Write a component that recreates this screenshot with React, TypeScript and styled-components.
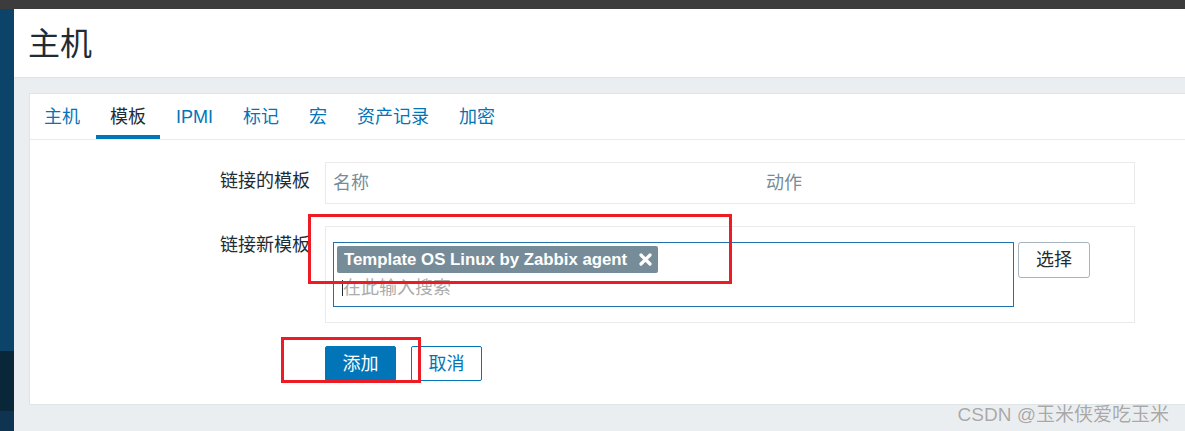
import React from "react";
import styled, { createGlobalStyle } from "styled-components";

const GlobalStyle = createGlobalStyle`
  html, body {
    margin: 0;
    padding: 0;
  }
  body {
    width: 1185px;
    height: 431px;
    overflow: hidden;
    background: #ebeef0;
    font-family: "Liberation Sans", "Noto Sans CJK SC", sans-serif;
    color: #1f2c33;
  }
`;

const Page = styled.div`
  position: relative;
  width: 1185px;
  height: 431px;
  display: flex;
  flex-direction: column;
  overflow: hidden;
`;

const TopBar = styled.div`
  height: 9px;
  flex-shrink: 0;
  background: #3c3c3c;
`;

const Body = styled.div`
  flex: 1;
  display: flex;
  min-height: 0;
`;

const Sidebar = styled.nav`
  width: 14px;
  flex-shrink: 0;
  display: flex;
  flex-direction: column;
`;

const SidebarBand = styled.div<{ $color: string; $height?: number }>`
  background: ${(p) => p.$color};
  ${(p) => (p.$height ? `height: ${p.$height}px;` : "flex: 1;")}
`;

const Main = styled.main`
  flex: 1;
  display: flex;
  flex-direction: column;
  background: #ebeef0;
`;

const Header = styled.header`
  height: 69px;
  flex-shrink: 0;
  display: flex;
  align-items: center;
  padding: 2px 0 0 14px;
  box-sizing: border-box;
  background: #fff;
  border-bottom: 1px solid #dfe4e7;
`;

const Title = styled.h1`
  margin: 0;
  font-size: 32px;
  font-weight: normal;
  color: #1f2c33;
  line-height: 1;
`;

const Content = styled.div`
  padding: 15px 0 0 15px;
`;

const Panel = styled.section`
  background: #fff;
  border: 1px solid #dfe4e7;
  border-right: none;
`;

const TabBar = styled.ul`
  display: flex;
  margin: 0;
  padding: 0;
  list-style: none;
  height: 45px;
  border-bottom: 1px solid #ebebeb;
`;

const Tab = styled.li<{ $active?: boolean }>`
  display: flex;
  align-items: center;
  padding: 0 14px;
  margin-right: 2px;
  font-size: 18px;
  line-height: 24px;
  color: ${(p) => (p.$active ? "#1f2c33" : "#0275b8")};
  box-shadow: ${(p) => (p.$active ? "inset 0 -4px 0 #0275b8" : "none")};
`;

const Form = styled.div`
  display: flex;
  flex-direction: column;
  gap: 22px;
  padding: 22px 0 23px;
`;

const Row = styled.div<{ $gapTop?: number }>`
  display: grid;
  grid-template-columns: 280px 810px;
  column-gap: 15px;
  margin-top: ${(p) => p.$gapTop ?? 0}px;
`;

const Label = styled.label`
  text-align: right;
  font-size: 18px;
  line-height: 24px;
  padding-top: 7px;
  color: #1f2c33;
`;

const TableBox = styled.div`
  height: 42px;
  box-sizing: border-box;
  border: 1px solid #ebebeb;
  display: grid;
  grid-template-columns: 433px 1fr;
  align-items: center;
  padding-left: 7px;
`;

const HeadCell = styled.span`
  font-size: 18px;
  line-height: 24px;
  color: #768d99;
`;

const FieldBox = styled.div`
  border: 1px solid #ebebeb;
  padding: 15px 7px;
  display: flex;
  align-items: flex-start;
  gap: 4px;
`;

const MultiSelect = styled.div`
  width: 681px;
  height: 65px;
  box-sizing: border-box;
  border: 1px solid #1f70ad;
  padding: 3px;
  display: flex;
  flex-direction: column;
`;

const TagList = styled.div`
  display: flex;
`;

const Tag = styled.span`
  display: inline-flex;
  align-items: center;
  gap: 12px;
  height: 27px;
  padding: 0 6px 0 7px;
  border-radius: 2px;
  background: #768d99;
  color: #fff;
  font-size: 16.8px;
  font-weight: bold;
`;

const SearchLine = styled.div`
  flex: 1;
  display: flex;
  align-items: center;
  padding-left: 5px;
`;

const Caret = styled.span`
  width: 1px;
  height: 16px;
  background: #1f2c33;
`;

const Placeholder = styled.span`
  font-size: 18px;
  line-height: 24px;
  color: #acacac;
`;

const Button = styled.button<{ $variant: "primary" | "outline" | "plain" }>`
  height: ${(p) => (p.$variant === "plain" ? 36 : 35)}px;
  width: ${(p) => (p.$variant === "plain" ? 72 : 71)}px;
  padding: 0;
  font-family: inherit;
  font-size: 18px;
  line-height: 24px;
  cursor: pointer;
  border-radius: ${(p) => (p.$variant === "plain" ? 3 : 2)}px;
  border: 1px solid
    ${(p) => (p.$variant === "plain" ? "#a5b4bf" : "#0275b8")};
  background: ${(p) => (p.$variant === "primary" ? "#0275b8" : "#fff")};
  color: ${(p) =>
    p.$variant === "primary"
      ? "#fff"
      : p.$variant === "outline"
      ? "#0275b8"
      : "#1f2c33"};
`;

const ButtonRow = styled.div`
  display: flex;
  gap: 15px;
`;

const Mark = styled.div`
  position: absolute;
  box-sizing: border-box;
  border: 3px solid #ed1c24;
  pointer-events: none;
`;

const Watermark = styled.div`
  position: absolute;
  right: 16px;
  top: 399px;
  font-size: 19px;
  color: #a8a8a8;
  text-shadow: 0 0 1px #fff;
`;

const RemoveIcon = () => (
  <svg width="13" height="13" viewBox="0 0 13 13">
    <path
      d="M2 2 L11 11 M11 2 L2 11"
      stroke="#fff"
      strokeWidth="3.2"
      strokeLinecap="round"
    />
  </svg>
);

const tabs = ["主机", "模板", "IPMI", "标记", "宏", "资产记录", "加密"];

const App = () => {
  return (
    <Page>
      <GlobalStyle />
      <TopBar />
      <Body>
        <Sidebar>
          <SidebarBand $color="#0b4468" />
          <SidebarBand $color="#0a2639" $height={60} />
          <SidebarBand $color="#0f3452" $height={20} />
        </Sidebar>
        <Main>
          <Header>
            <Title>主机</Title>
          </Header>
          <Content>
            <Panel>
              <TabBar>
                {tabs.map((t) => (
                  <Tab key={t} $active={t === "模板"}>
                    {t}
                  </Tab>
                ))}
              </TabBar>
              <Form>
                <Row>
                  <Label>链接的模板</Label>
                  <TableBox>
                    <HeadCell>名称</HeadCell>
                    <HeadCell>动作</HeadCell>
                  </TableBox>
                </Row>
                <Row>
                  <Label>链接新模板</Label>
                  <FieldBox>
                    <MultiSelect>
                      <TagList>
                        <Tag>
                          Template OS Linux by Zabbix agent
                          <RemoveIcon />
                        </Tag>
                      </TagList>
                      <SearchLine>
                        <Caret />
                        <Placeholder>在此输入搜索</Placeholder>
                      </SearchLine>
                    </MultiSelect>
                    <Button $variant="plain">选择</Button>
                  </FieldBox>
                </Row>
                <Row $gapTop={1}>
                  <span />
                  <ButtonRow>
                    <Button $variant="primary">添加</Button>
                    <Button $variant="outline">取消</Button>
                  </ButtonRow>
                </Row>
              </Form>
            </Panel>
          </Content>
        </Main>
      </Body>
      <Mark style={{ left: 308, top: 214, width: 424, height: 70 }} />
      <Mark style={{ left: 281, top: 337, width: 140, height: 46 }} />
      <Watermark>CSDN @玉米侠爱吃玉米</Watermark>
    </Page>
  );
};

export default App;
